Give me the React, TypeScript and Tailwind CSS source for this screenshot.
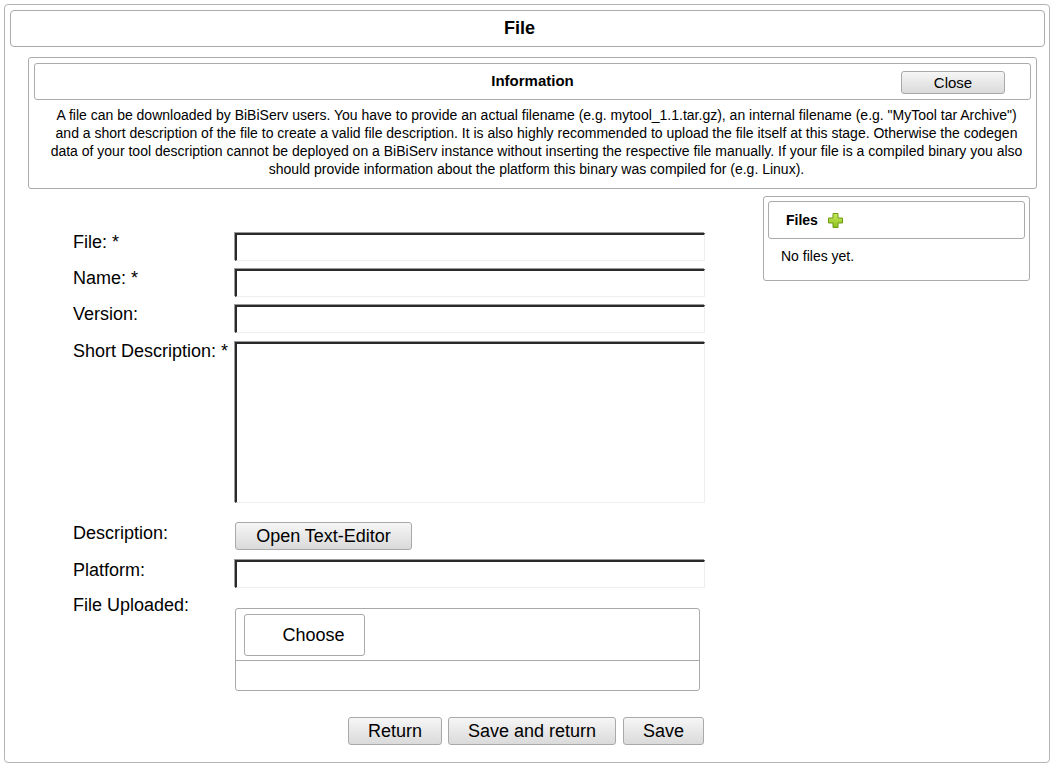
import React from "react";

const inputCls =
  "block h-[28px] w-[470px] bg-white border-t-2 border-l-2 border-r border-b border-t-[#2a2a2a] border-l-[#2a2a2a] border-r-[#eeeeee] border-b-[#eeeeee] shadow-[-1px_-1px_0_#9a9a9a]";

const btnBase =
  "rounded-[3px] border border-[#a9a9a9] bg-gradient-to-b from-[#f6f6f6] to-[#dadada] leading-none text-black flex items-center justify-center";

function Plus() {
  return (
    <svg width="17" height="17" viewBox="0 0 17 17">
      <defs>
        <linearGradient id="pg" x1="0" y1="0" x2="0" y2="1">
          <stop offset="0" stopColor="#c8ea5a" />
          <stop offset="1" stopColor="#8cc21f" />
        </linearGradient>
      </defs>
      <path
        d="M6 1.5h5v4.5h4.5v5H11v4.5H6V11H1.5V6H6z"
        fill="url(#pg)"
        stroke="#6f9a16"
        strokeWidth="1"
        strokeLinejoin="round"
      />
    </svg>
  );
}

export default function App() {
  return (
    <div className="w-[1056px] h-[769px] bg-white pt-[4px] pl-[4px] font-['Liberation_Sans',Arial,sans-serif] text-black">
      <div className="w-[1046px] h-[759px] rounded-[4px] border border-[#b4b4b4] pt-[5px] pl-[5px] pr-[4px]">
        <div className="flex h-[37px] items-center justify-center rounded-[4px] border border-[#ababab] pr-[16px] text-[18px] font-bold">
          File
        </div>

        <div className="ml-[18px] mr-[8px] mt-[10px] rounded-[3px] border border-[#ababab] px-[5px] pt-[5px] pb-[10px]">
          <div className="relative flex h-[37px] items-center justify-center rounded-[3px] border border-[#ababab] text-[15px] font-bold">
            Information
            <button className={btnBase + " absolute right-[25px] top-[7px] h-[23px] w-[104px] text-[15px] font-normal"}>
              Close
            </button>
          </div>
          <p className="mt-[6px] pl-[8px] text-center text-[14px] leading-[18px] whitespace-nowrap">
            A file can be downloaded by BiBiServ users. You have to provide an actual filename (e.g. mytool_1.1.tar.gz), an internal filename (e.g. "MyTool tar Archive")
            <br />
            and a short description of the file to create a valid file description. It is also highly recommended to upload the file itself at this stage. Otherwise the codegen
            <br />
            data of your tool description cannot be deployed on a BiBiServ instance without inserting the respective file manually. If your file is a compiled binary you also
            <br />
            should provide information about the platform this binary was compiled for (e.g. Linux).
          </p>
        </div>

        <div className="flex">
          <div className="ml-[63px] w-[632px] pt-[44px] text-[18px] leading-[18px]">
            <div className="flex flex-col gap-[8px]">
              <div className="flex">
                <div className="w-[162px]">File: *</div>
                <div className={inputCls} />
              </div>
              <div className="flex">
                <div className="w-[162px]">Name: *</div>
                <div className={inputCls} />
              </div>
              <div className="flex">
                <div className="w-[162px]">Version:</div>
                <div className={inputCls} />
              </div>
              <div className="flex mt-[1px] mb-[11px]">
                <div className="w-[162px] whitespace-nowrap">Short Description: *</div>
                <div className={inputCls + " h-[161px]"} />
              </div>
              <div className="flex mb-[2px]">
                <div className="w-[162px] pt-[2px]">Description:</div>
                <button className={btnBase + " h-[28px] w-[177px] text-[18px]"}>Open Text-Editor</button>
              </div>
              <div className="flex">
                <div className="w-[162px] pt-[1px]">Platform:</div>
                <div className={inputCls} />
              </div>
              <div className="flex">
                <div className="w-[162px]">File Uploaded:</div>
                <div className="mt-[12px] h-[83px] w-[465px] rounded-[3px] border border-[#a9a9a9]">
                  <div className="h-[52px] border-b border-[#a9a9a9] pl-[8px] pt-[5px]">
                    <button className="flex h-[42px] w-[121px] items-center justify-center rounded-[3px] border border-[#a9a9a9] bg-white pl-[18px] text-[18px]">
                      Choose
                    </button>
                  </div>
                </div>
              </div>
            </div>
            <div className="mt-[26px] flex justify-end pr-[1px]">
              <button className={btnBase + " h-[28px] w-[94px] text-[18px]"}>Return</button>
              <button className={btnBase + " ml-[6px] h-[28px] w-[168px] text-[18px]"}>Save and return</button>
              <button className={btnBase + " ml-[7px] h-[28px] w-[81px] text-[18px]"}>Save</button>
            </div>
          </div>

          <div className="ml-[58px] mt-[7px] h-[85px] w-[267px] rounded-[3px] border border-[#ababab] px-[4px] pt-[4px]">
            <div className="flex h-[38px] items-center rounded-[3px] border border-[#ababab] pl-[17px] text-[14px] font-bold">
              Files
              <span className="ml-[9px] flex items-center"><Plus /></span>
            </div>
            <div className="mt-[7px] pl-[13px] text-[14px]">No files yet.</div>
          </div>
        </div>
      </div>
    </div>
  );
}
